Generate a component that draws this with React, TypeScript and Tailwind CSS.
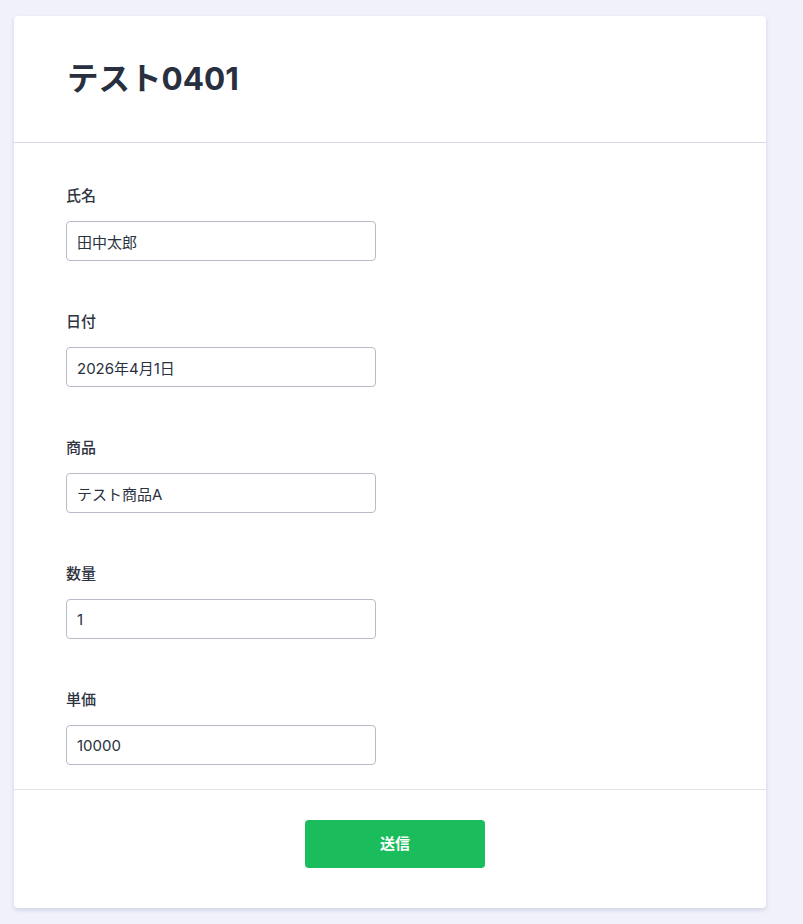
import React from "react";

const fields = [
  { label: "氏名", value: "田中太郎" },
  { label: "日付", value: "2026年4月1日" },
  { label: "商品", value: "テスト商品A" },
  { label: "数量", value: "1" },
  { label: "単価", value: "10000" },
];

export default function App() {
  return (
    <div
      className="min-h-[924px] bg-[#f1f1fc] pt-4 pl-[14px] pr-[37px] pb-4"
      style={{ fontFamily: 'Inter, "Noto Sans CJK JP", sans-serif' }}
    >
      <div className="w-[752px] bg-white rounded-[4px] shadow-[0_2px_4px_rgba(60,64,110,0.18)]">
        <div className="h-[127px] flex items-center pl-[53px] border-b border-[#d9d9e4]">
          <h1 className="text-[31.5px] font-bold text-[#28303f] leading-[40px]">
            テスト0401
          </h1>
        </div>
        <div className="pl-[52px] pt-[43px] pb-[24px] flex flex-col gap-[51px]">
          {fields.map((f) => (
            <div key={f.label} className="flex flex-col">
              <label className="text-[15px] font-medium text-[#2e3340] leading-[20px] mb-[15px]">
                {f.label}
              </label>
              <input
                readOnly
                value={f.value}
                className="w-[310px] h-[40px] border border-[#b9bcc8] rounded-[4px] px-[10px] text-[15px] text-[#2a3140] outline-none"
              />
            </div>
          ))}
        </div>
        <div className="border-t border-[#e3e3ea] flex justify-center pl-[10px] pt-[30px] pb-[40px]">
          <button className="w-[180px] h-[48px] rounded-[4px] bg-[#1abc5c] text-white text-[15px] font-bold">
            送信
          </button>
        </div>
      </div>
    </div>
  );
}
